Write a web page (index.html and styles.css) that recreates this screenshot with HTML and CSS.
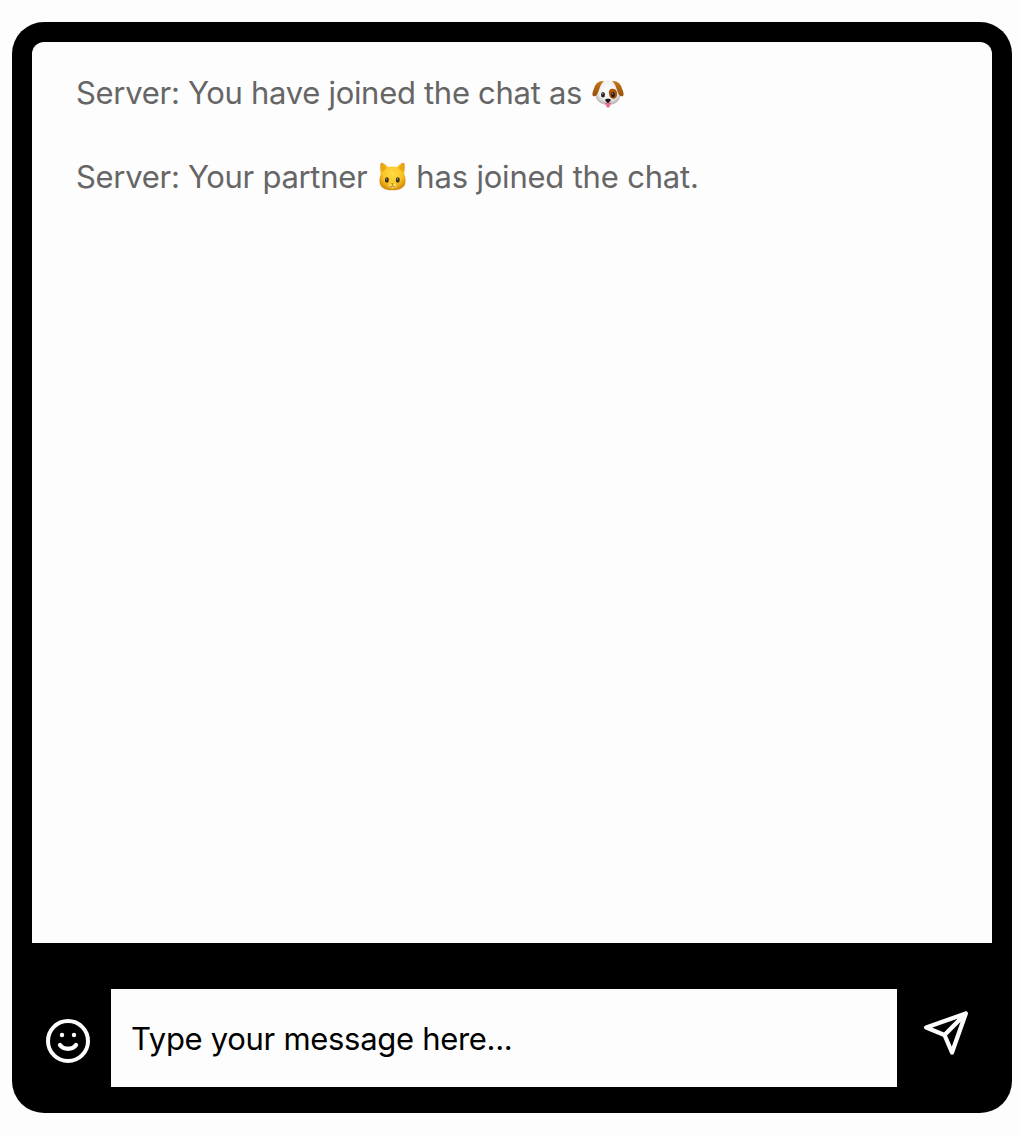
FILE: index.html
```html
<!DOCTYPE html>
<html lang="en">
<head>
<meta charset="utf-8">
<title>Chat</title>
<link rel="stylesheet" href="styles.css">
</head>
<body>
<main class="chat">
  <section class="messages">
    <p class="message"><span class="text-joined">Server: You have joined the chat as</span><svg class="dog" viewBox="0 0 32 28" aria-label="dog">
      <defs>
        <radialGradient id="fur" cx=".5" cy=".38" r=".62"><stop offset="0" stop-color="#fff"/><stop offset=".65" stop-color="#eee"/><stop offset="1" stop-color="#b5b2b0"/></radialGradient>
        <linearGradient id="ear" x2="0" y2="1"><stop offset="0" stop-color="#c87517"/><stop offset="1" stop-color="#94500f"/></linearGradient>
      </defs>
      <path d="M16 .7C10 .7 6.500 3.500 5.500 9.500c-2 4-2.500 8.500.5 11.500 2.500 2.500 6 4 10 4s7.500-1.500 10-4c3-3 2.500-7.500.5-11.500C25.500 3.500 22 .7 16 .7Z" fill="url(#fur)"/>
      <path d="M11.800 1C6.500.7 3.500 3.500 2 8.500.6 12 0 14 .7 15.500c1 1.600 3.400.9 4.700-1.500C7.500 10 8 4.500 11.800 1ZM20.200 1c5.300-.3 8.300 2.500 9.800 7.500 1.400 3.500 2 5.500 1.300 7-1 1.600-3.400.9-4.700-1.500C24.500 10 24 4.500 20.200 1Z" fill="url(#ear)"/>
      <path d="M17 14c-.8-3.500 1-5.300 3.800-5.200 3.200 0 4.700 3 4.300 6-.4 2.800-2 4.400-4.200 4C18.500 18.300 17.500 16.500 17 14Z" fill="#a9560c"/>
      <ellipse cx="11" cy="14.700" rx="2" ry="2.700" fill="#282421"/>
      <ellipse cx="21" cy="14.700" rx="2" ry="2.700" fill="#30190a"/>
      <circle cx="10.700" cy="13.700" r=".5" fill="#fff"/><circle cx="20.700" cy="13.700" r=".5" fill="#fff"/>
      <path d="M13.700 22.500h4.700c.2 3-.5 5.200-2.300 5.200s-2.600-2.200-2.400-5.200Z" fill="#f06f88"/>
      <path d="M13.300 19.500c.2-.9 5.200-.9 5.400 0 .3 1.400-1.200 2.500-2.100 2.700 0 1 1.400 1.300 2.400.8h-6c1 .5 2.400.2 2.400-.8-.9-.2-2.400-1.300-2.100-2.700Z" fill="#15110f"/>
    </svg></p>
    <p class="message"><span class="text-partner">Server: Your partner</span><svg class="cat" viewBox="0 0 27 29" aria-label="cat">
      <defs><radialGradient id="gold" cx=".5" cy=".4" r=".62"><stop offset="0" stop-color="#ffdb45"/><stop offset=".6" stop-color="#fbc525"/><stop offset="1" stop-color="#d48608"/></radialGradient></defs>
      <path d="M2.200.7C3.800.2 7.200 2.700 9 5.100c3-.8 6-.8 9 0 1.800-2.400 5.200-4.900 6.800-4.400 1.500 1.300 1 8.300.3 11 1 2.500 1.700 5.500 1.300 8.800-.6 5-5.400 7.800-12.900 7.800S1.200 25.500.6 20.500c-.4-3.300.3-6.300 1.300-8.800-.7-2.700-1.200-9.700.3-11Z" fill="url(#gold)"/>
      <path d="M2.900 2.500C5 3 6.500 4.500 7.500 6L3.200 10C2.500 7 2.300 4.500 2.900 2.500ZM24.100 2.500C22 3 20.500 4.500 19.500 6l4.300 4c.7-3 .9-5.500.3-7.500Z" fill="#e8a514"/>
      <ellipse cx="7.900" cy="18" rx="1.900" ry="2.800" fill="#382f1b"/><ellipse cx="18.800" cy="18" rx="1.900" ry="2.800" fill="#382f1b"/>
      <circle cx="7.600" cy="17" r=".5" fill="#fff"/><circle cx="18.500" cy="17" r=".5" fill="#fff"/>
      <path d="M9 24c1-1.800 2.700-2.700 4.500-2.700S17 22.200 18 24c-1 1.700-2.300 2.300-4.500 2.300S10 25.700 9 24Z" fill="#fbd95c"/>
      <path d="M12.200 21.500h2.500l-1.250 1.300Z" fill="#965119"/>
      <path d="M13.450 22.800v1m-3 .7c1.200 1 2.500.5 3-.7.500 1.200 1.800 1.700 3 .7" fill="none" stroke="#9c691a" stroke-width=".8"/>
      <path d="M.8 20l4 1M.9 23l4-.4M26.200 20l-4 1M26.100 23l-4-.4" stroke="#dba02a" stroke-width=".6"/>
    </svg><span class="text-partner-end">has joined the chat.</span></p>
  </section>
  <form class="composer">
    <button class="icon-button emoji-button" type="button" aria-label="Emoji">
      <svg class="smile" viewBox="0 0 44 44" fill="none" stroke="#fdfdfd" stroke-width="4" stroke-linecap="round"><circle cx="22" cy="22" r="20"/><path d="M14 26c3.600 5 12.400 5 16 0" stroke-width="4.300"/><g fill="#fdfdfd" stroke="none"><circle cx="16" cy="16" r="2.200"/><circle cx="28" cy="16" r="2.200"/></g></svg>
    </button>
    <input class="field" type="text" placeholder="Type your message here..." aria-label="Message">
    <button class="icon-button send-button" type="button" aria-label="Send">
      <svg class="send" viewBox="0 0 46 46" fill="none" stroke="#fdfdfd" stroke-width="4.300" stroke-linecap="round" stroke-linejoin="round"><path d="M42.800 3.500 3.200 17.500l18.300 7.500L29 42.500 42.800 3.500 21.500 25"/></svg>
    </button>
  </form>
</main>
</body>
</html>
```

FILE: styles.css
```css
* { box-sizing: border-box; }
body {
  margin: 0;
  padding: 22px 8px 23px 12px;
  background: #fdfdfd;
  font-family: Inter, "Liberation Sans", sans-serif;
}
.chat {
  display: flex;
  flex-direction: column;
  width: 1000px;
  height: 1091px;
  padding: 20px 20px 26px;
  border-radius: 32px;
  background: #000;
}
.messages {
  display: flex;
  flex-direction: column;
  gap: 36px;
  height: 901px;
  padding: 27px 44px;
  border-radius: 12px 12px 0 0;
  background: #fdfdfd;
  color: #666;
}
.message {
  display: flex;
  height: 48px;
  margin: 0;
  font-size: 31px;
  line-height: 48px;
  letter-spacing: -0.3px;
  white-space: nowrap;
}
.dog { width: 32px; height: 28px; margin: 11px 0 0 10px; }
.cat { width: 27px; height: 29px; margin: 9px 10px 0 12px; }
.text-joined, .text-partner, .text-partner-end { flex: none; }
.text-partner-end { letter-spacing: -0.2px; }
.composer {
  display: flex;
  margin-top: 46px;
  height: 98px;
}
.icon-button {
  padding: 0;
  border: 0;
  background: none;
}
.icon-button svg { display: block; }
.emoji-button { width: 79px; padding: 6px 0 0 14px; }
.smile { width: 44px; height: 44px; }
.field {
  width: 786px;
  height: 98px;
  padding: 0 20px;
  border: 0;
  border-radius: 0;
  outline: 0;
  background: #fdfdfd;
  font: 31px Inter, "Liberation Sans", sans-serif;
  letter-spacing: -0.3px;
}
.field::placeholder { color: #000; opacity: 1; }
.send-button { padding: 0 0 10px 26px; }
.send { width: 46px; height: 46px; }
```
